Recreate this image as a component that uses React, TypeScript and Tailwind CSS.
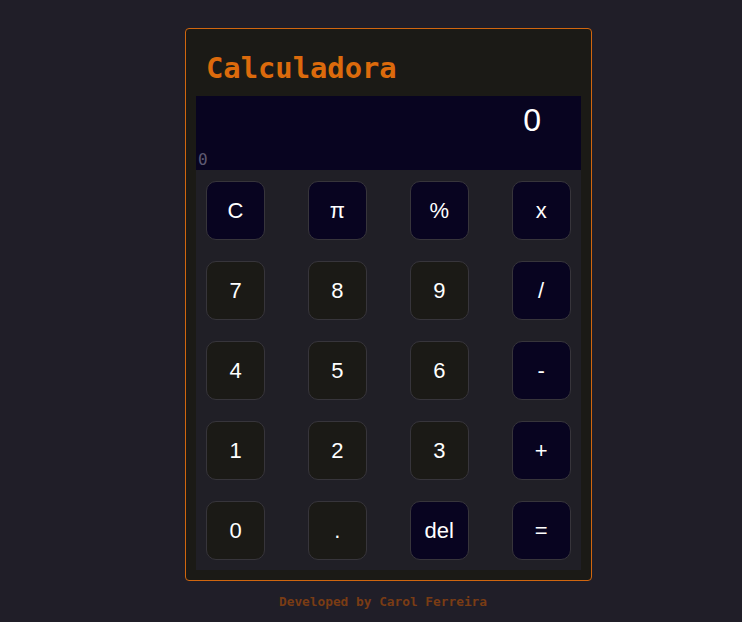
const keys: { label: string; op?: boolean }[] = [
  { label: 'C', op: true },
  { label: 'π', op: true },
  { label: '%', op: true },
  { label: 'x', op: true },
  { label: '7' },
  { label: '8' },
  { label: '9' },
  { label: '/', op: true },
  { label: '4' },
  { label: '5' },
  { label: '6' },
  { label: '-', op: true },
  { label: '1' },
  { label: '2' },
  { label: '3' },
  { label: '+', op: true },
  { label: '0' },
  { label: '.' },
  { label: 'del', op: true },
  { label: '=', op: true },
];

const Key = ({ label, op }: { label: string; op?: boolean }) => (
  <button
    className={
      op
        ? 'flex h-[59px] w-[59px] items-center justify-center rounded-[10px] border border-[#37353b] bg-[#080420] font-["Liberation_Sans",Arial,sans-serif] text-[22px] text-white'
        : 'flex h-[59px] w-[59px] items-center justify-center rounded-[10px] border border-[#37353b] bg-[#1b1a16] font-["Liberation_Sans",Arial,sans-serif] text-[22px] text-white'
    }
  >
    {label}
  </button>
);

export default function App() {
  return (
    <div className="flex min-h-[622px] flex-col items-center bg-[#201e28] pl-[35px] pt-[28px]">
      <div className="w-[407px] rounded-[4px] border border-[#d0660f] bg-[#1b1a16] px-[10px] pb-[10px]">
        <h1 className="px-[10px] pb-[10px] pt-[22px] font-['DejaVu_Sans_Mono',monospace] text-[28.8px] font-bold leading-[35px] text-[#dc6a0c]">
          Calculadora
        </h1>
        <div className="flex h-[74px] flex-col bg-[#080420]">
          <div className="pr-[40px] pt-[6px] text-right font-['Liberation_Sans',Arial,sans-serif] text-[32px] leading-[37px] text-white">
            0
          </div>
          <div className="mt-auto pl-[2px] font-['DejaVu_Sans_Mono',monospace] text-[16px] leading-[20px] text-[#5e5a72]">
            0
          </div>
        </div>
        <div className="grid grid-cols-4 gap-x-[42.5px] gap-y-[21px] bg-[#201f26] px-[10px] pb-[10px] pt-[11px]">
          {keys.map((k) => (
            <Key key={k.label} label={k.label} op={k.op} />
          ))}
        </div>
      </div>
      <p className="mr-[11px] mt-[11px] font-['DejaVu_Sans_Mono',monospace] text-[12.8px] font-bold text-[#7a3c14]">
        Developed by Carol Ferreira
      </p>
    </div>
  );
}
